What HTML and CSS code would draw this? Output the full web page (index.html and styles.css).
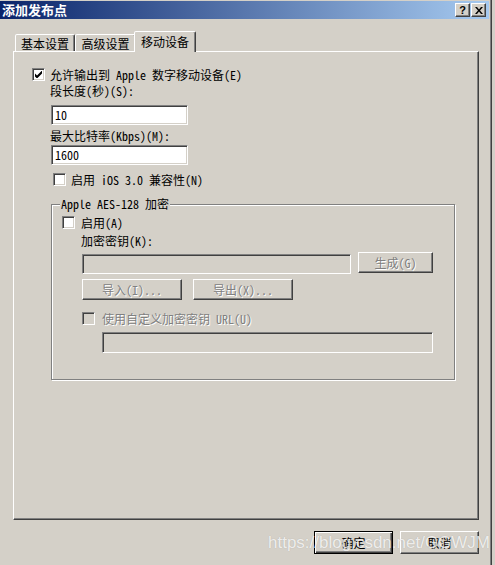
FILE: index.html
```html
<!DOCTYPE html>
<html lang="zh-CN">

<head>
  <meta charset="UTF-8">
  <title>添加发布点</title>
  <link rel="stylesheet" href="styles.css">
</head>

<body>
  <div class="window">

    <!-- Caption bar -->
    <div class="titlebar">
      <span class="title">添加发布点</span>
      <div class="caption-buttons">
        <span class="cap-btn">?</span>
        <span class="cap-btn">
          <svg width="8" height="7" viewBox="0 0 8 7"><path d="M0 0h2l2 2.5L6 0h2L5 3.5 8 7H6L4 4.5 2 7H0l3-3.5z" fill="#000"/></svg>
        </span>
      </div>
    </div>

    <div class="dialog">
      <div class="tabs">
        <div class="tab tab-basic">基本设置</div>
        <div class="tab tab-advanced">高级设置</div>
        <div class="tab tab-mobile active">移动设备</div>
      </div>

      <div class="panel">
        <div class="check-row">
          <span class="checkbox">
            <svg width="7" height="7" viewBox="0 0 7 7"><polygon points="0,2.5 2,4.5 7,-0.5 7,2.5 2,7.5 0,5.5" fill="#000"/></svg>
          </span>
          允许输出到 Apple 数字移动设备(E)
        </div>

        <div class="indent">
          <div class="label segment-label">段长度(秒)(S):</div>
          <div class="textbox segment-box">10</div>
          <div class="label bitrate-label">最大比特率(Kbps)(M):</div>
          <div class="textbox bitrate-box">1600</div>
          <div class="check-row ios-row">
            <span class="checkbox"></span>
            启用 iOS 3.0 兼容性(N)
          </div>
        </div>

        <!-- Encryption group -->
        <div class="group">
          <span class="group-title">Apple AES-128 加密</span>
          <div class="check-row enable-row">
            <span class="checkbox"></span>
            启用(A)
          </div>
          <div class="label key-label">加密密钥(K):</div>
          <div class="key-row">
            <div class="textbox disabled key-box"></div>
            <div class="btn disabled gen-btn">生成(G)</div>
          </div>
          <div class="io-row">
            <div class="btn disabled io-btn">导入(I)...</div>
            <div class="btn disabled io-btn">导出(X)...</div>
          </div>
          <div class="check-row url-row disabled">
            <span class="checkbox"></span>
            使用自定义加密密钥 URL(U)
          </div>
          <div class="textbox disabled url-box"></div>
        </div>
      </div>

      <div class="footer">
        <div class="btn default">确定</div>
        <div class="btn">取消</div>
      </div>
    </div>

    <div class="watermark">https://blog.csdn.net/GGWJM</div>
  </div>
</body>

</html>
```

FILE: styles.css
```css
body {
  margin: 0;
  background: #d4d0c8;
  font-family: "Noto Sans Mono CJK SC", "Noto Sans CJK SC", sans-serif;
  font-size: 12px;
  line-height: 14px;
  color: #000;
  overflow: hidden;
}

.window {
  position: relative;
  width: 491px;
  height: 564px;
  padding-top: 1px;
  border-right: 1px solid #404040;
  box-shadow: inset -1px 0 #808080;
}

/* Caption bar */
.titlebar {
  height: 18px;
  margin-right: 2px;
  padding: 0 3px 0 2px;
  display: flex;
  align-items: center;
  justify-content: space-between;
  background: linear-gradient(to right, #0a246a, #a6caf0);
}

.title {
  color: #fff;
  font-family: "Noto Sans CJK SC", sans-serif;
  font-weight: bold;
  font-size: 13px;
}

.caption-buttons {
  display: flex;
  gap: 1px;
}

.cap-btn {
  width: 15px;
  height: 14px;
  box-sizing: border-box;
  background: #d4d0c8;
  border: 1px solid;
  border-color: #fff #404040 #404040 #fff;
  box-shadow: inset -1px -1px #808080;
  display: flex;
  align-items: center;
  justify-content: center;
  font: bold 11px "Liberation Sans", sans-serif;
}

.dialog {
  padding: 12px 0 0 13px;
}

/* Tabs */
.tabs {
  display: flex;
  align-items: flex-end;
  height: 20px;
  padding-left: 2px;
  position: relative;
  z-index: 1;
}

.tab {
  height: 17px;
  box-sizing: border-box;
  border: 1px solid;
  border-bottom: none;
  border-color: #fff #404040 transparent #fff;
  border-radius: 2px 2px 0 0;
  box-shadow: inset -1px 0 #808080;
  display: flex;
  align-items: center;
  justify-content: center;
  padding-top: 1px;
  background: #d4d0c8;
}

.tab-basic { width: 60px; }
.tab-advanced { width: 61px; }
.tab-mobile { width: 62px; }

.tab.active {
  height: 21px;
  margin-bottom: -1px;
  margin-left: -2px;
  padding-top: 0;
}

.panel {
  width: 466px;
  height: 469px;
  box-sizing: border-box;
  border: 1px solid;
  border-color: #fff #404040 #404040 #fff;
  box-shadow: inset -1px -1px #808080;
  padding: 16px 0 0 18px;
}

/* Controls */
.check-row {
  display: flex;
  align-items: center;
  gap: 5px;
  height: 13px;
}

.checkbox {
  flex: none;
  width: 13px;
  height: 13px;
  box-sizing: border-box;
  border: 1px solid;
  border-color: #808080 #fff #fff #808080;
  box-shadow: inset 1px 1px #404040, inset -1px -1px #d4d0c8;
  background: #fff;
  display: flex;
  align-items: center;
  justify-content: center;
}

.textbox {
  height: 20px;
  box-sizing: border-box;
  border: 1px solid;
  border-color: #808080 #fff #fff #808080;
  box-shadow: inset 1px 1px #404040, inset -1px -1px #d4d0c8;
  background: #fff;
  padding-left: 3px;
  display: flex;
  align-items: center;
}

.btn {
  width: 79px;
  height: 23px;
  box-sizing: border-box;
  border: 1px solid;
  border-color: #fff #404040 #404040 #fff;
  box-shadow: inset -1px -1px #808080;
  display: flex;
  align-items: center;
  justify-content: center;
}

.btn.default {
  border-color: #000;
  box-shadow: inset 1px 1px #fff, inset -1px -1px #404040, inset -2px -2px #808080;
}

.disabled {
  color: #808080;
  text-shadow: 1px 1px #fff;
}

.textbox.disabled,
.disabled .checkbox {
  background: #d4d0c8;
}

/* Mobile device tab */
.indent {
  padding-left: 18px;
}

.segment-label { margin-top: 3px; }

.segment-box,
.bitrate-box {
  width: 137px;
  margin-left: 1px;
}

.segment-box { margin-top: 7px; }
.bitrate-label { margin-top: 4px; }
.bitrate-box { margin-top: 2px; }

.ios-row {
  margin: 8px 0 0 3px;
}

.group {
  width: 404px;
  height: 176px;
  box-sizing: border-box;
  margin: 18px 0 0 19px;
  border: 1px solid #808080;
  box-shadow: inset 1px 1px #fff, 1px 1px #fff;
  padding-left: 10px;
  display: flex;
  flex-direction: column;
  align-items: flex-start;
}

.group-title {
  margin: -8px 0 0 -2px;
  padding: 0 1px;
  background: #d4d0c8;
}

.enable-row {
  margin-top: 5px;
  gap: 6px;
}

.key-label {
  margin: 5px 0 0 19px;
}

.key-row {
  display: flex;
  align-items: flex-start;
  margin: 4px 0 0 20px;
}

.key-box {
  width: 269px;
  margin-top: 2px;
}

.gen-btn {
  width: 75px;
  height: 21px;
  margin-left: 7px;
}

.io-row {
  display: flex;
  gap: 11px;
  margin: 5px 0 0 20px;
}

.io-btn {
  width: 100px;
  height: 21px;
}

.url-row {
  margin: 12px 0 0 20px;
  gap: 7px;
}

.url-box {
  width: 331px;
  height: 21px;
  margin: 7px 0 0 40px;
}

.footer {
  width: 466px;
  margin-top: 11px;
  display: flex;
  justify-content: flex-end;
  gap: 7px;
}

.watermark {
  position: absolute;
  left: 268px;
  top: 533px;
  font: 17px "Liberation Sans", sans-serif;
  line-height: 20px;
  color: rgba(255, 255, 255, 0.8);
  text-shadow: 0 0 1px rgba(0, 0, 0, 0.2);
  pointer-events: none;
}
```
